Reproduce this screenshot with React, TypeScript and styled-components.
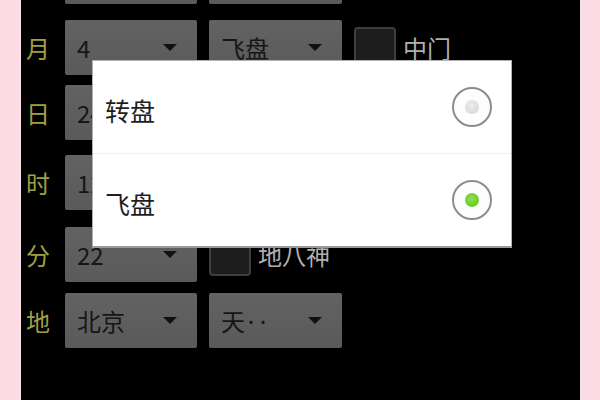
import React, { useState } from "react";
import styled, { createGlobalStyle } from "styled-components";

const GlobalStyle = createGlobalStyle`
  html, body {
    margin: 0;
    padding: 0;
    background: #fcdde6;
    font-family: "Noto Sans CJK SC", "Noto Sans", sans-serif;
  }
`;

type Field = {
  label: string;
  first: string;
  second?: string;
  check?: string;
  top: number;
};

// first row is scrolled away, only the bottom of its spinners shows
const fields: Field[] = [
  { label: "", first: "", second: "", top: -51 },
  { label: "月", first: "4", second: "飞盘", check: "中门", top: 16 },
  { label: "日", first: "24", second: "阳遁", check: "值使", top: 10 },
  { label: "时", first: "12", second: "拆补", check: "星宫", top: 15 },
  { label: "分", first: "22", check: "地八神", top: 17 },
  { label: "地", first: "北京", second: "天‥", top: 11 },
];

const options = ["转盘", "飞盘"];

export default function App() {
  const [selected, setSelected] = useState(1);

  return (
    <>
      <GlobalStyle />
      <Screen>
        <Form>
          {fields.map((f, i) => (
            <Row key={i} $top={f.top}>
              <Label>{f.label}</Label>
              <Spinner>
                <SpinnerText>{f.first}</SpinnerText>
                <Arrow />
              </Spinner>
              {f.second !== undefined ? (
                <Spinner>
                  <SpinnerText>{f.second}</SpinnerText>
                  <Arrow />
                </Spinner>
              ) : (
                <CheckRow>
                  <CheckBox />
                  <CheckText>{f.check}</CheckText>
                </CheckRow>
              )}
              {f.second !== undefined && f.check && (
                <CheckRow>
                  <CheckBox />
                  <CheckText>{f.check}</CheckText>
                </CheckRow>
              )}
            </Row>
          ))}
        </Form>

        <Dialog>
          {options.map((o, i) => (
            <Option key={o} $last={i === options.length - 1} onClick={() => setSelected(i)}>
              <OptionText>{o}</OptionText>
              <Radio $on={selected === i} />
            </Option>
          ))}
        </Dialog>
      </Screen>
    </>
  );
}

const Screen = styled.div`
  position: relative;
  width: 559px;
  height: 400px;
  margin-left: 21px;
  background: #000;
  overflow: hidden;
`;

const Form = styled.div`
  display: flex;
  flex-direction: column;
`;

const Row = styled.div<{ $top: number }>`
  display: grid;
  grid-template-columns: 32px 132px 133px auto;
  column-gap: 12px;
  align-items: center;
  height: 55px;
  margin-top: ${(p) => p.$top}px;
`;

const Label = styled.div`
  padding-left: 5px;
  font-size: 24px;
  color: #a0a042;
  line-height: 1;
`;

const Spinner = styled.div`
  display: flex;
  align-items: center;
  justify-content: space-between;
  height: 55px;
  padding: 0 20px 0 12px;
  box-sizing: border-box;
  background: linear-gradient(#626262, #5a5a5a);
  border-radius: 2px;
`;

const SpinnerText = styled.span`
  font-size: 24px;
  color: #161616;
`;

const Arrow = styled.span`
  width: 0;
  height: 0;
  border-left: 7px solid transparent;
  border-right: 7px solid transparent;
  border-top: 7px solid #111;
`;

const CheckRow = styled.div`
  display: flex;
  align-items: center;
  gap: 7px;
`;

const CheckBox = styled.span`
  width: 42px;
  height: 42px;
  box-sizing: border-box;
  background: #1d1d1d;
  border: 2px solid #3e3e3e;
  border-radius: 4px;
`;

const CheckText = styled.span`
  font-size: 24px;
  color: #b0b0b0;
`;

const Dialog = styled.div`
  position: absolute;
  left: 71px;
  top: 60px;
  width: 420px;
  background: #fff;
  border: 1px solid #b0b0b0;
  border-bottom: 2px solid #9a9a9a;
  box-sizing: border-box;
`;

const Option = styled.div<{ $last: boolean }>`
  display: flex;
  align-items: center;
  justify-content: space-between;
  height: 92px;
  padding: 0 19px 0 12px;
  border-bottom: ${(p) => (p.$last ? "none" : "1px solid #f0f0f0")};
`;

const OptionText = styled.span`
  font-size: 25px;
  color: #1e1e1e;
  padding-top: 6px;
`;

const Radio = styled.span<{ $on: boolean }>`
  display: flex;
  align-items: center;
  justify-content: center;
  width: 40px;
  height: 40px;
  box-sizing: border-box;
  border: 2px solid #8c8c8c;
  border-radius: 50%;
  background: #fdfdfd;

  &::after {
    content: "";
    width: 14px;
    height: 14px;
    border-radius: 50%;
    background: ${(p) =>
      p.$on
        ? "radial-gradient(circle at 45% 40%, #8ee04a, #5cc21c)"
        : "radial-gradient(circle at 45% 40%, #eeeeee, #d2d2d2)"};
  }
`;
